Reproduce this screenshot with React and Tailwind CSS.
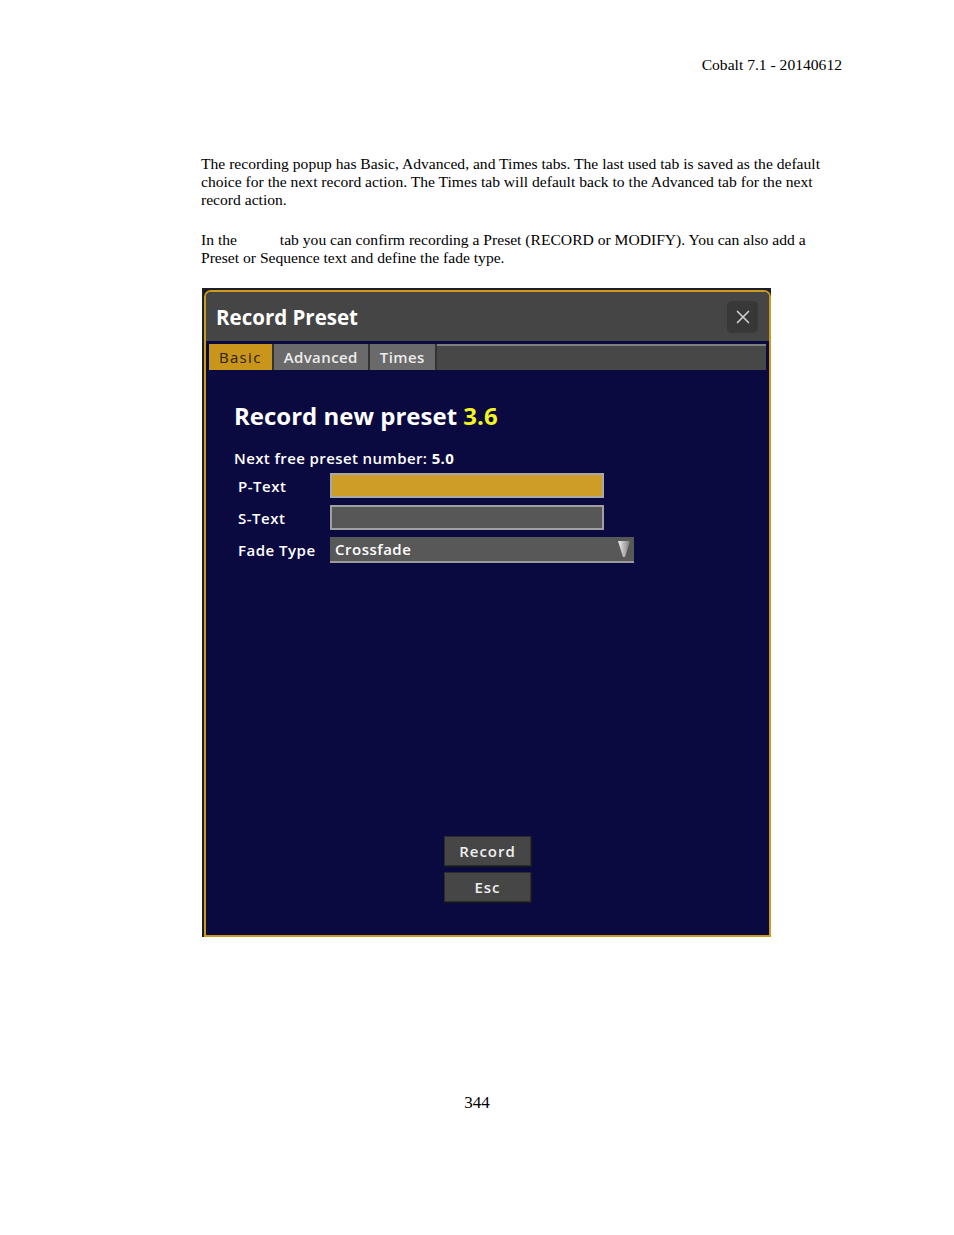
import React from 'react';
import { X } from 'lucide-react';

const ui = { fontFamily: '"Open Sans", "DejaVu Sans", sans-serif' };

const Tab = ({ label, active }) => (
  <div
    className={
      active
        ? 'h-full px-[10px] flex items-center bg-[#c9951a] text-[#2b2000] text-[15px] tracking-[1.3px]'
        : 'h-full px-[10px] flex items-center bg-[#6a6a6a] text-[#ececec] text-[15px] font-semibold tracking-[0.4px]'
    }
  >
    {label}
  </div>
);

const Row = ({ label, children }) => (
  <div className="flex items-center">
    <div className="w-[96px] pl-[4px] text-[15px] font-semibold tracking-[0.5px] text-white">{label}</div>
    {children}
  </div>
);

const DialogButton = ({ label }) => (
  <button className="w-[87px] h-[30px] bg-[#464646] border border-[#2c2c2c] shadow-[1px_1px_0_#1a1a1a] text-[15px] font-semibold tracking-[1px] text-[#eeeeee]">
    {label}
  </button>
);

export default function App() {
  return (
    <div className="w-[954px] h-[1235px] bg-white text-black text-[15.6px] leading-[18px]" style={{ fontFamily: '"Liberation Serif", serif' }}>
      <div className="pt-[56px] pr-[112px] text-right">Cobalt 7.1 - 20140612</div>

      <div className="pl-[201px] mt-[81px] whitespace-nowrap">
        <p>
          The recording popup has Basic, Advanced, and Times tabs. The last used tab is saved as the default
          <br />
          choice for the next record action. The Times tab will default back to the Advanced tab for the next
          <br />
          record action.
        </p>
        <p className="mt-[22px]">
          In the <span className="inline-block w-[39px]"></span>tab you can confirm recording a Preset (RECORD or MODIFY). You can also add a
          <br />
          Preset or Sequence text and define the fade type.
        </p>
      </div>

      {/* screenshot of the record popup */}
      <div className="ml-[202px] mt-[21px] w-[569px] h-[649px] bg-[#1e1e28] pt-[2px] pl-[2px]" style={ui}>
        <div className="w-[567px] h-[647px] border-2 border-[#cc9a1c] rounded-t-[7px] bg-[#0a0940] flex flex-col overflow-hidden">
          <div className="h-[49px] bg-[#454545] flex items-center justify-between pl-[10px] pr-[11px] pt-[1px]">
            <span className="text-[20.5px] font-bold text-white">Record Preset</span>
            <div className="w-[31px] h-[32px] rounded-[5px] bg-[#383838] flex items-center justify-center">
              <X size={22} strokeWidth={1.8} className="text-[#d0d0d0]" />
            </div>
          </div>

          <div className="mt-[3px] mx-[3px] h-[26px] flex gap-[2px] bg-[#333]">
            <Tab label="Basic" active />
            <Tab label="Advanced" />
            <Tab label="Times" />
            <div className="flex-1 bg-[#474747] border-t-2 border-[#7e7e7e]"></div>
          </div>

          <div className="flex-1 flex flex-col pl-[28px]">
            <div className="mt-[31px] text-[24px] leading-[30px] font-bold text-white">
              Record new preset <span className="text-[#f4f41e]">3.6</span>
            </div>
            <div className="mt-[17px] text-[15px] leading-[20px] font-semibold tracking-[0.4px] text-white">
              Next free preset number: <span className="font-bold">5.0</span>
            </div>

            <div className="mt-[5px] flex flex-col gap-[7px]">
              <Row label="P-Text">
                <div className="w-[274px] h-[25px] bg-[#cd9d28] border-2 border-[#a8a8a8]"></div>
              </Row>
              <Row label="S-Text">
                <div className="w-[274px] h-[25px] bg-[#575757] border-2 border-[#a0a0a0]"></div>
              </Row>
              <Row label="Fade Type">
                <div className="w-[304px] h-[26px] bg-[#585858] border-b-2 border-[#9a9a9a] flex items-center justify-between pl-[5px] pr-[4px]">
                  <span className="text-[15px] font-semibold tracking-[0.5px] text-white">Crossfade</span>
                  <svg width="12" height="18" viewBox="0 0 12 18">
                    <defs>
                      <linearGradient id="tri" x1="0" x2="1" y1="0" y2="0">
                        <stop offset="0" stopColor="#f0f0f0" />
                        <stop offset="1" stopColor="#7a7a7a" />
                      </linearGradient>
                    </defs>
                    <polygon points="0,1 12,1 7,17 5,17" fill="url(#tri)" />
                  </svg>
                </div>
              </Row>
            </div>

            <div className="mt-auto mb-[33px] -ml-[28px] flex flex-col items-center gap-[6px]">
              <DialogButton label="Record" />
              <DialogButton label="Esc" />
            </div>
          </div>
        </div>
      </div>

      <div className="mt-[156px] text-center text-[17px] leading-[20px]">344</div>
    </div>
  );
}
